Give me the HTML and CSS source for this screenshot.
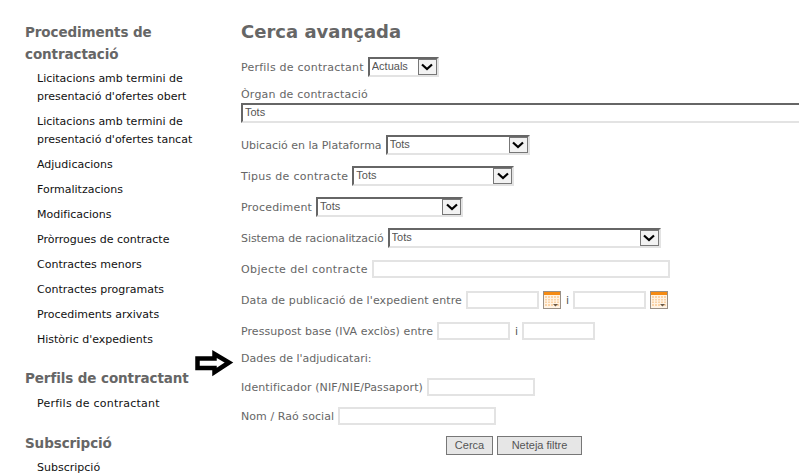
FILE: index.html
```html
<!DOCTYPE html>
<html lang="ca">
<head>
<meta charset="utf-8">
<title>Cerca avançada</title>
<link rel="stylesheet" href="styles.css">
</head>
<body>
<svg class="defs" width="0" height="0" aria-hidden="true">
  <symbol id="chev" viewBox="0 0 12 8"><path d="M1 1.5 L6 6 L11 1.5" fill="none" stroke="#000" stroke-width="2.2"/></symbol>
  <symbol id="cal" viewBox="0 0 18 18">
    <rect x=".5" y=".5" width="17" height="17" fill="#fff3e4" stroke="#9a9086"/>
    <rect x="1" y="1" width="16" height="3" fill="#f58a12"/>
    <rect x="2" y="5" width="14" height="10" fill="#fbd3a6"/>
    <path d="M4.5 5v10M7.5 5v10M10.5 5v10M13.5 5v10M2 7.5h14M2 10h14M2 12.5h14" stroke="#fff3e4" stroke-width="1"/>
    <path d="M10 13h5l-2.5 2.5z" fill="#6b5a48"/>
  </symbol>
</svg>
<div class="page">
  <nav class="side">
    <h2 class="side-title">Procediments de contractació</h2>
    <ul class="side-list">
      <li>Licitacions amb termini de presentació d'ofertes obert</li>
      <li>Licitacions amb termini de presentació d'ofertes tancat</li>
      <li>Adjudicacions</li>
      <li>Formalitzacions</li>
      <li>Modificacions</li>
      <li>Pròrrogues de contracte</li>
      <li>Contractes menors</li>
      <li>Contractes programats</li>
      <li>Procediments arxivats</li>
      <li>Històric d'expedients</li>
    </ul>
    <h2 class="side-title">Perfils de contractant</h2>
    <ul class="side-list side-list-short">
      <li class="ls-perfil">Perfils de contractant</li>
    </ul>
    <h2 class="side-title">Subscripció</h2>
    <ul class="side-list">
      <li>Subscripció</li>
    </ul>
  </nav>
  <main class="main">
    <h1 class="title">Cerca avançada</h1>
    <form class="form">
      <div class="row">
        <label class="ls-perfil">Perfils de contractant</label>
        <span class="sel w-perfil"><select><option>Actuals</option></select><span class="arrow"><svg><use href="#chev"/></svg></span></span>
      </div>
      <div class="stack">
        <label class="ls-organ">Òrgan de contractació</label>
        <span class="sel w-organ"><select><option>Tots</option></select></span>
      </div>
      <div class="row">
        <label>Ubicació en la Plataforma</label>
        <span class="sel w-ubic"><select><option>Tots</option></select><span class="arrow"><svg><use href="#chev"/></svg></span></span>
      </div>
      <div class="row">
        <label class="ls-tipus">Tipus de contracte</label>
        <span class="sel w-tipus"><select><option>Tots</option></select><span class="arrow"><svg><use href="#chev"/></svg></span></span>
      </div>
      <div class="row">
        <label class="ls-proc">Procediment</label>
        <span class="sel w-proc"><select><option>Tots</option></select><span class="arrow"><svg><use href="#chev"/></svg></span></span>
      </div>
      <div class="row">
        <label class="ls-sist">Sistema de racionalització</label>
        <span class="sel w-sist"><select><option>Tots</option></select><span class="arrow"><svg><use href="#chev"/></svg></span></span>
      </div>
      <div class="row">
        <label class="ls-obj">Objecte del contracte</label>
        <input class="inp w-obj" type="text">
      </div>
      <div class="row">
        <label class="ls-data">Data de publicació de l'expedient entre</label>
        <input class="inp w-date" type="text">
        <svg class="cal"><use href="#cal"/></svg>
        <span class="sep-i">i</span>
        <input class="inp w-date" type="text">
        <svg class="cal"><use href="#cal"/></svg>
      </div>
      <div class="row">
        <label class="ls-press">Pressupost base (IVA exclòs) entre</label>
        <input class="inp w-date" type="text">
        <span class="sep-i">i</span>
        <input class="inp w-date" type="text">
      </div>
      <div class="row-plain">
        <svg class="pointer" viewBox="0 0 40 25" aria-hidden="true"><path d="M2.5 7.5 H19.5 V3 L34 11.5 L19.5 21 V17 H2.5 Z" fill="#fff" stroke="#000" stroke-width="4.5" stroke-linejoin="miter"/></svg>
        <label>Dades de l'adjudicatari:</label>
      </div>
      <div class="row row-tight">
        <label class="ls-data">Identificador (NIF/NIE/Passaport)</label>
        <input class="inp w-id" type="text">
      </div>
      <div class="row">
        <label class="ls-nom">Nom / Raó social</label>
        <input class="inp w-nom" type="text">
      </div>
      <div class="actions">
        <button class="btn w-cerca" type="button">Cerca</button>
        <button class="btn w-neteja" type="button">Neteja filtre</button>
      </div>
    </form>
  </main>
</div>
</body>
</html>
```
FILE: styles.css
```css
html, body {
  margin: 0;
  padding: 0;
  width: 799px;
  height: 476px;
  overflow: hidden;
  background: #fff;
}
.defs { display: block; }
.page {
  display: flex;
  align-items: flex-start;
  font-family: "DejaVu Sans", Verdana, sans-serif;
  font-size: 11px;
}
.side {
  flex: 0 0 216px;
  padding: 21px 0 0 25px;
}
.side-title {
  margin: 0;
  font-size: 13.5px;
  letter-spacing: -0.1px;
  font-weight: bold;
  line-height: 22px;
  color: #666;
  width: 180px;
}
.side-list {
  list-style: none;
  margin: 5px 0 18px;
  padding: 0 0 0 12px;
  color: #111;
  line-height: 18px;
  width: 180px;
}
.side-list-short { margin: 6px 0 19px; }
.side-list li { margin-bottom: 7px; }
.main {
  flex: 0 0 auto;
  width: 558px;
}
.title {
  margin: 22px 0 0;
  font-size: 18px;
  font-weight: bold;
  line-height: 20px;
  color: #666;
}
.form { margin-top: 15px; color: #666; }
.row {
  display: flex;
  align-items: center;
  height: 20px;
  margin-bottom: 11px;
  gap: 4px;
  white-space: nowrap;
}
.row-tight { margin-bottom: 9px; }
.stack { margin-top: -2px; margin-bottom: 12px; }
.stack label { display: block; line-height: 17px; height: 17px; }
.stack select { padding-bottom: 1px; }
.row-plain {
  position: relative;
  height: 17px;
  line-height: 15px;
  margin-top: -1px;
  margin-bottom: 9px;
}
.pointer {
  position: absolute;
  left: -46px;
  top: 0;
  width: 40px;
  height: 25px;
  overflow: visible;
}
.ls-perfil { letter-spacing: 0.23px; }
.ls-organ { letter-spacing: 0.2px; }
.ls-tipus { letter-spacing: 0.28px; }
.ls-proc { letter-spacing: 0.18px; }
.ls-sist { letter-spacing: -0.08px; }
.ls-obj { letter-spacing: 0.38px; }
.ls-data { letter-spacing: 0.1px; }
.ls-press { letter-spacing: 0.07px; }
.ls-nom { letter-spacing: 0.06px; }
.sel {
  position: relative;
  display: inline-block;
  height: 20px;
  flex: none;
}
.sel select {
  appearance: none;
  -webkit-appearance: none;
  display: block;
  width: 100%;
  height: 100%;
  box-sizing: border-box;
  margin: 0;
  padding: 0 0 3px 2px;
  border-style: solid;
  border-width: 2px;
  border-color: #666 #e3e3e3 #e3e3e3 #666;
  border-radius: 0;
  background: #fff;
  color: #555;
  font-family: "Liberation Sans", Arial, sans-serif;
  font-size: 11px;
  outline: none;
}
.arrow {
  position: absolute;
  right: 2px;
  top: 2px;
  width: 17px;
  height: 14px;
  border: 1px solid #777;
  background: #f2f2f2;
  display: flex;
  align-items: center;
  justify-content: center;
}
.arrow svg { width: 12px; height: 8px; }
.w-perfil { width: 71px; }
.w-organ { width: 600px; display: block; }
.w-ubic { width: 144px; }
.w-tipus { width: 162px; }
.w-proc { width: 147px; }
.w-sist { width: 273px; }
.inp {
  box-sizing: border-box;
  height: 18px;
  margin: 0;
  padding: 0 2px;
  border: 2px solid #e3e3e3;
  border-radius: 0;
  background: #fff;
  outline: none;
  flex: none;
}
.w-obj { width: 298px; }
.w-date { width: 73px; }
.w-id { width: 108px; }
.w-nom { width: 158px; }
.cal { width: 18px; height: 18px; flex: none; }
.sep-i { padding-left: 1px; color: #555; }
.actions {
  display: flex;
  gap: 4px;
  margin-left: 205px;
  margin-top: -1px;
}
.btn {
  height: 19px;
  box-sizing: border-box;
  margin: 0;
  padding: 0 0 2px;
  border: 1px solid #777;
  border-radius: 0;
  background: #e6e6e6;
  color: #555;
  font-family: "Liberation Sans", Arial, sans-serif;
  font-size: 11px;
}
.w-cerca { width: 47px; }
.w-neteja { width: 85px; }
```
